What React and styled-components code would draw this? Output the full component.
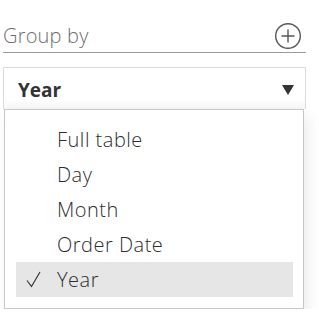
import styled, { createGlobalStyle } from "styled-components";

const GlobalStyle = createGlobalStyle`
  body {
    margin: 0;
    background: #fff;
    font-family: "Open Sans", "Liberation Sans", sans-serif;
  }
`;

const Panel = styled.div`
  width: 303px;
  padding: 19px 0 0 3px;
`;

const Header = styled.div`
  display: flex;
  align-items: center;
  justify-content: space-between;
  height: 33px;
  border-bottom: 1px solid #9a9a9a;
`;

const HeaderTitle = styled.span`
  font-size: 20px;
  font-weight: 300;
  letter-spacing: 0.2px;
  color: #6e6e6e;
  line-height: 28px;
  margin-top: 1px;
`;

const AddButton = styled.button`
  display: flex;
  padding: 0;
  margin-right: 4px;
  border: none;
  background: none;
  cursor: pointer;
`;

const Select = styled.div`
  margin-top: 14px;
  height: 42px;
  display: flex;
  align-items: center;
  justify-content: space-between;
  padding: 2px 11px 0 14px;
  box-sizing: border-box;
  border: 1px solid #dcdcdc;
  border-bottom: none;
  background: linear-gradient(#fff 75%, #f6f6f6);
`;

const SelectValue = styled.span`
  font-size: 19px;
  font-weight: 700;
  color: #333;
`;

const Caret = styled.span`
  width: 0;
  height: 0;
  border-left: 6px solid transparent;
  border-right: 6px solid transparent;
  border-top: 10px solid #333;
`;

const Menu = styled.ul`
  width: 277px;
  margin: 0 0 0 1px;
  padding: 12px 10px 11px 11px;
  list-style: none;
  background: #fff;
  border: 1px solid #c8c8c8;
  box-shadow: 4px 6px 14px rgba(0, 0, 0, 0.08);
`;

const MenuItem = styled.li`
  position: relative;
  height: 35px;
  display: flex;
  align-items: center;
  padding-left: 41px;
  font-size: 20px;
  font-weight: 300;
  letter-spacing: 0.5px;
  color: #2e2e2e;
  background: ${(p) => (p.$selected ? "#e6e6e6" : "transparent")};
`;

const Check = styled.svg`
  position: absolute;
  left: 10px;
  top: 9px;
`;

const options = ["Full table", "Day", "Month", "Order Date", "Year"];

export default function App() {
  const selected = "Year";
  return (
    <>
      <GlobalStyle />
      <Panel>
        <Header>
          <HeaderTitle>Group by</HeaderTitle>
          <AddButton aria-label="Add">
            <svg width="28" height="28" viewBox="0 0 28 28">
              <circle cx="14" cy="14" r="12.3" fill="none" stroke="#555" strokeWidth="1.4" />
              <path d="M14 7.5v13M7.5 14h13" stroke="#555" strokeWidth="1.4" />
            </svg>
          </AddButton>
        </Header>
        <Select>
          <SelectValue>{selected}</SelectValue>
          <Caret />
        </Select>
        <Menu>
          {options.map((o) => (
            <MenuItem key={o} $selected={o === selected}>
              {o === selected && (
                <Check width="15" height="17" viewBox="0 0 15 17">
                  <path d="M1 9.5l4.5 6L14 1" fill="none" stroke="#333" strokeWidth="1.2" />
                </Check>
              )}
              {o}
            </MenuItem>
          ))}
        </Menu>
      </Panel>
    </>
  );
}
